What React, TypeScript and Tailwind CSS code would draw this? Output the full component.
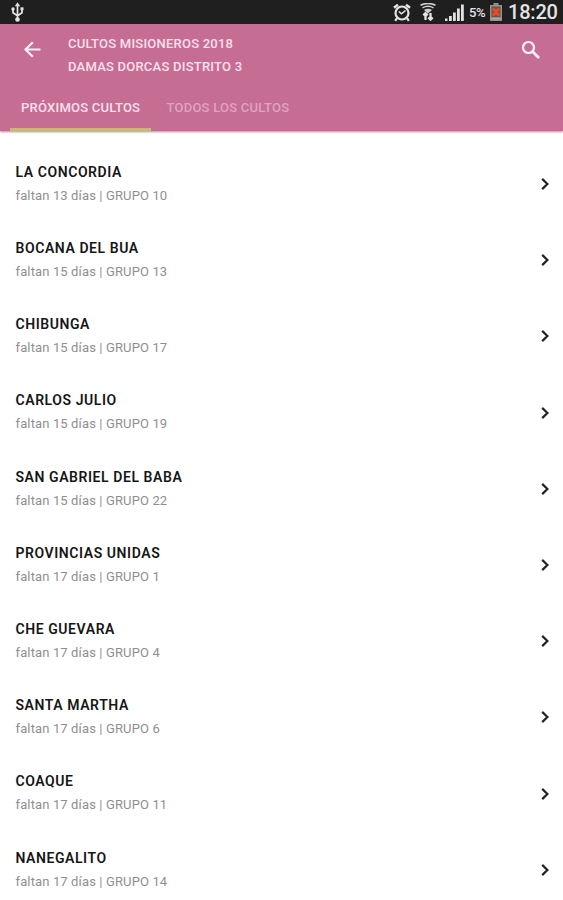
const rows = [
  { name: 'LA CONCORDIA', days: 13, group: 10 },
  { name: 'BOCANA DEL BUA', days: 15, group: 13 },
  { name: 'CHIBUNGA', days: 15, group: 17 },
  { name: 'CARLOS JULIO', days: 15, group: 19 },
  { name: 'SAN GABRIEL DEL BABA', days: 15, group: 22 },
  { name: 'PROVINCIAS UNIDAS', days: 17, group: 1 },
  { name: 'CHE GUEVARA', days: 17, group: 4 },
  { name: 'SANTA MARTHA', days: 17, group: 6 },
  { name: 'COAQUE', days: 17, group: 11 },
  { name: 'NANEGALITO', days: 17, group: 14 },
];

function UsbIcon() {
  return (
    <svg className="ml-[11px] h-[20px] w-[13px]" viewBox="0 0 13 20" fill="none" stroke="#e4e4e4" strokeWidth="1.7">
      <path d="M6.5 3v14M2 7.5v3.2l4.5 3.1M11 6.5v4.2l-4.5 3.1" />
      <path d="M6.5 0.3 9.2 4.2H3.8z" fill="#e4e4e4" stroke="none" />
      <circle cx="2" cy="7" r="1.7" fill="#e4e4e4" stroke="none" />
      <path d="M9.5 5.3h3v3h-3z" fill="#e4e4e4" stroke="none" />
      <circle cx="6.5" cy="17.5" r="2.3" fill="#e4e4e4" stroke="none" />
    </svg>
  );
}

function AlarmIcon() {
  return (
    <svg className="h-[19px] w-[18px]" viewBox="0 0 18 19" fill="none" stroke="#e4e4e4" strokeWidth="2.2">
      <circle cx="9" cy="10" r="6.5" />
      <path d="M5.8 8.5 8.5 10.8l4-3.300" strokeWidth="1.6" />
      <path d="M1 4.8 5 1.7M17 4.8 13 1.7" strokeWidth="2.6" />
      <path d="M4 15.2 2.2 17.8M14 15.2l1.8 2.6" />
    </svg>
  );
}

function WifiIcon() {
  return (
    <svg className="ml-[9px] h-[18px] w-[16px]" viewBox="0 0 16 18" fill="none" stroke="#cfcfcf">
      <path d="M.5 2.2c4.5-2 10.500-2 15 0" strokeWidth="1.6" />
      <path d="M2.500 4.800c3.200-1.800 7.800-1.800 11 0" strokeWidth="1.5" />
      <path d="M4 7c2.400-1.600 5.600-1.600 8 0L8 10.500z" fill="#cfcfcf" stroke="none" />
      <path d="M5.500 17v-6M3.300 12.400l2.200-2.200 2.200 2.200M10.500 10v6.500M8.300 14.500l2.200 2.200 2.200-2.200" stroke="#e4e4e4" strokeWidth="2.300" />
    </svg>
  );
}

function SignalIcon() {
  return (
    <svg className="ml-[9px] h-[18px] w-[19px]" viewBox="0 0 19 18" fill="#e2e2e2">
      <path d="M0 15.5h2.5V18H0zM4 13h2.8v5H4zM8 9.5h2.8V18H8zM12 5.500h2.8V18H12zM16 1.500h2.8V18H16z" />
    </svg>
  );
}

function BatteryIcon() {
  return (
    <svg className="ml-[2px] h-[18px] w-[12px]" viewBox="0 0 12 18">
      <path d="M3.5 0h5v2H12v16H0V2h3.5z" fill="#929292" />
      <path d="M1.5 3.5h9v11h-9z" fill="#66544c" />
      <path d="m3 5.500 6 7M9 5.500l-6 7" stroke="#ee481c" strokeWidth="2.8" />
      <path d="M1.5 14.5h9v2h-9z" fill="#a9a9a9" />
    </svg>
  );
}

export default function App() {
  return (
    <div className="flex h-[900px] w-[563px] flex-col overflow-hidden bg-white font-['Roboto','Liberation_Sans',sans-serif]">
      <div className="flex h-[24px] shrink-0 items-center bg-[#1f1f1f]">
        <UsbIcon />
        <div className="ml-auto flex items-center pr-[6px] text-[#e4e4e4]">
          <AlarmIcon />
          <WifiIcon />
          <SignalIcon />
          <span className="ml-[5px] w-[19px] whitespace-nowrap pt-[2px] text-[13px] font-medium leading-[18px] tracking-[-0.3px]">5%</span>
          <BatteryIcon />
          <span className="ml-[6px] w-[49px] whitespace-nowrap text-[20px] font-medium leading-[24px] tracking-[-0.2px]">18:20</span>
        </div>
      </div>
      <header className="flex h-[107px] shrink-0 flex-col bg-[#c66d94] text-[#fbe0eb] shadow-[0_1px_2px_rgba(0,0,0,0.4)]">
        <div className="flex h-[60px]">
          <svg className="ml-[24px] mt-[17px] h-[17px] w-[17px]" viewBox="0 0 17 17" fill="none" stroke="#fff0f6" strokeWidth="2.2">
            <path d="M16.5 8.5H2M8.8 1.2 1.5 8.5l7.3 7.3" />
          </svg>
          <div className="ml-[27px] mt-[9px] text-[13px] font-medium leading-[22.5px] tracking-[0.23px]">
            <div>CULTOS MISIONEROS 2018</div>
            <div>DAMAS DORCAS DISTRITO 3</div>
          </div>
          <svg className="ml-auto mr-[22px] mt-[16px] h-[20px] w-[20px]" viewBox="0 0 20 20" fill="none" stroke="#fff0f6">
            <circle cx="7.5" cy="7.5" r="5.5" strokeWidth="2.2" />
            <path d="m11.5 11.5 6.5 6.5" strokeWidth="2.8" />
          </svg>
        </div>
        <nav className="flex h-[47px] pl-[10px] text-[13px] font-medium leading-[48px] tracking-[0.24px]">
          <div className="h-[47px] w-[141px] whitespace-nowrap border-b-[3px] border-[#ccb777] pl-[11px]">PRÓXIMOS CULTOS</div>
          <div className="ml-[15.5px] whitespace-nowrap text-[#dfa3bf]">TODOS LOS CULTOS</div>
        </nav>
      </header>
      <main className="flex flex-col pt-[3px]">
        {rows.map((row) => (
          <div key={row.name} className="flex h-[76.2px] shrink-0 items-center justify-between pl-[15.5px] pr-[13px] pt-[24px]">
            <div className="h-[76.2px]">
              <div className="mt-[13.9px] text-[14px] font-semibold leading-[24px] tracking-[0.57px] text-[#161616]">{row.name}</div>
              <div className="text-[13px] leading-[24px] tracking-[0.13px] text-[#8f8f8f]">
                faltan {row.days} días | GRUPO {row.group}
              </div>
            </div>
            <svg className="h-[12px] w-[9px]" viewBox="0 0 9 12" fill="none" stroke="#222" strokeWidth="2.2">
              <path d="m1.2 .9 5.2 5.1-5.2 5.1" />
            </svg>
          </div>
        ))}
      </main>
    </div>
  );
}
